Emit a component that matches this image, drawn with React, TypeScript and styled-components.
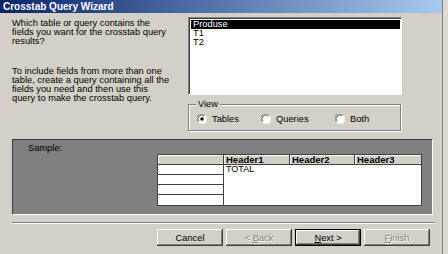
import React from 'react';
import styled, { createGlobalStyle, css } from 'styled-components';

const GlobalStyle = createGlobalStyle`
  html, body {
    margin: 0;
    padding: 0;
    background: #dcd9d2;
  }
  body {
    font-family: "Liberation Sans", Arial, sans-serif;
  }
`;

const Window = styled.div`
  width: 443px;
  height: 254px;
  box-sizing: border-box;
  background: #d4d0c8;
  border-right: 1px solid #808080;
  display: flex;
  flex-direction: column;
  font-size: 9.3px;
  color: #000;
  overflow: hidden;
`;

const TitleBar = styled.div`
  height: 13px;
  display: flex;
  align-items: center;
  padding-left: 3px;
  background: linear-gradient(to right, #0a246a, #a6caf0);
  color: #fff;
  font-weight: bold;
  font-size: 10px;
`;

const Body = styled.div`
  display: flex;
  flex-direction: column;
  padding: 4px 0 0 12px;
`;

const TopRow = styled.div`
  display: flex;
`;

const Instructions = styled.div`
  width: 176px;
  padding-top: 2px;
  display: flex;
  flex-direction: column;
  gap: 21px;
`;

const Para = styled.p`
  margin: 0;
  line-height: 9px;
  white-space: nowrap;
`;

const RightColumn = styled.div`
  width: 214px;
  display: flex;
  flex-direction: column;
`;

const ListBox = styled.div`
  height: 78px;
  box-sizing: border-box;
  background: #fff;
  border-top: 1px solid #808080;
  border-left: 1px solid #808080;
  border-right: 1px solid #fff;
  border-bottom: 1px solid #fff;
  box-shadow: inset 1px 1px 0 #404040;
  padding: 2px 1px 0 2px;
  display: flex;
  flex-direction: column;
`;

const ListItem = styled.div<{ selected?: boolean }>`
  height: 9px;
  line-height: 9px;
  padding-left: 2px;
  ${p => p.selected && css`
    background: #000;
    color: #fff;
  `}
`;

const GroupBox = styled.div`
  position: relative;
  margin-top: 9px;
  height: 27px;
  box-sizing: border-box;
  border: 1px solid #808080;
  box-shadow: inset 1px 1px 0 #fff, 1px 1px 0 #fff;
  display: flex;
  align-items: center;
  padding: 2px 0 0 8px;
  width: 213px;
`;

const GroupLabel = styled.span`
  position: absolute;
  left: 7px;
  top: -6px;
  padding: 0 2px;
  background: #d4d0c8;
  line-height: 10px;
`;

const RadioOption = styled.label<{ $width: number }>`
  display: flex;
  align-items: center;
  gap: 5px;
  width: ${p => p.$width}px;
`;

const SamplePanel = styled.div`
  margin-top: 8px;
  width: 421px;
  height: 76px;
  box-sizing: border-box;
  background: #808080;
  border-top: 1px solid #404040;
  border-left: 1px solid #404040;
  border-right: 1px solid #fff;
  border-bottom: 1px solid #fff;
  padding: 3px 0 0 15px;
  display: flex;
  flex-direction: column;
`;

const SampleLabel = styled.div`
  color: #000;
  line-height: 10px;
`;

const SampleGrid = styled.div`
  margin: 1px 0 0 129px;
  display: grid;
  grid-template-columns: 65px 65px 64px 66px;
  grid-template-rows: 9px 9px 9px 9px 10px;
  gap: 1px;
  background: #404040;
  border: 1px solid #404040;
  width: max-content;
`;

const HeaderCell = styled.div`
  background: #d4d0c8;
  box-shadow: inset 1px 1px 0 #fff;
  font-weight: bold;
  font-size: 9.5px;
  line-height: 9px;
  padding-left: 2px;
`;

const RowCell = styled.div`
  background: #fff;
`;

const DataArea = styled.div`
  grid-column: 2 / 5;
  grid-row: 2 / 6;
  background: #fff;
  line-height: 9px;
  padding-left: 2px;
  font-size: 9px;
`;

const Separator = styled.div`
  margin-top: 7px;
  width: 423px;
  height: 1px;
  background: #808080;
  border-bottom: 1px solid #fff;
`;

const ButtonRow = styled.div`
  margin-top: 5px;
  padding-left: 145px;
  display: flex;
  gap: 3px;
`;

const Button = styled.button<{ $default?: boolean; disabled?: boolean }>`
  width: 66px;
  height: 17px;
  box-sizing: border-box;
  padding: 0;
  font-family: "Liberation Sans", Arial, sans-serif;
  font-size: 9.3px;
  background: #d4d0c8;
  border: none;
  color: #000;
  box-shadow: inset -1px -1px 0 #404040, inset 1px 1px 0 #fff, inset -2px -2px 0 #808080;
  ${p => p.$default && css`
    border: 1px solid #000;
  `}
  ${p => p.disabled && css`
    color: #808080;
    text-shadow: 1px 1px 0 #fff;
  `}
`;

const Radio = ({ checked }: { checked?: boolean }) => (
  <svg width="10" height="10" viewBox="0 0 12 12">
    <circle cx="6" cy="6" r="5.5" fill="#fff" />
    <path d="M1.5 9.5 A5.5 5.5 0 0 1 9.5 1.5" stroke="#808080" strokeWidth="1" fill="none" />
    <path d="M2.5 8.5 A4.2 4.2 0 0 1 8.5 2.5" stroke="#404040" strokeWidth="1" fill="none" />
    <path d="M10.5 2.5 A5.5 5.5 0 0 1 2.5 10.5" stroke="#fff" strokeWidth="1" fill="none" />
    {checked && <circle cx="6" cy="6" r="2" fill="#000" />}
  </svg>
);

export default function App() {
  return (
    <>
      <GlobalStyle />
      <Window>
        <TitleBar>Crosstab Query Wizard</TitleBar>
        <Body>
          <TopRow>
            <Instructions>
              <Para>
                Which table or query contains the<br />
                fields you want for the crosstab query<br />
                results?
              </Para>
              <Para>
                To include fields from more than one<br />
                table, create a query containing all the<br />
                fields you need and then use this<br />
                query to make the crosstab query.
              </Para>
            </Instructions>
            <RightColumn>
              <ListBox>
                <ListItem selected>Produse</ListItem>
                <ListItem>T1</ListItem>
                <ListItem>T2</ListItem>
              </ListBox>
              <GroupBox>
                <GroupLabel>View</GroupLabel>
                <RadioOption $width={64}><Radio checked />Tables</RadioOption>
                <RadioOption $width={74}><Radio />Queries</RadioOption>
                <RadioOption $width={50}><Radio />Both</RadioOption>
              </GroupBox>
            </RightColumn>
          </TopRow>
          <SamplePanel>
            <SampleLabel>Sample:</SampleLabel>
            <SampleGrid>
              <HeaderCell />
              <HeaderCell>Header1</HeaderCell>
              <HeaderCell>Header2</HeaderCell>
              <HeaderCell>Header3</HeaderCell>
              <RowCell style={{ gridRow: 2 }} />
              <RowCell style={{ gridRow: 3 }} />
              <RowCell style={{ gridRow: 4 }} />
              <RowCell style={{ gridRow: 5 }} />
              <DataArea>TOTAL</DataArea>
            </SampleGrid>
          </SamplePanel>
          <Separator />
          <ButtonRow>
            <Button>Cancel</Button>
            <Button disabled>&lt; <u>B</u>ack</Button>
            <Button $default><u>N</u>ext &gt;</Button>
            <Button disabled><u>F</u>inish</Button>
          </ButtonRow>
        </Body>
      </Window>
    </>
  );
}
